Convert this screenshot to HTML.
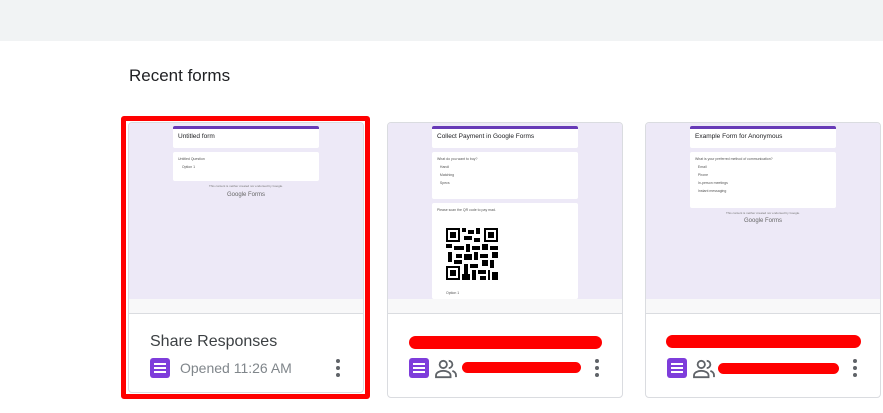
<!DOCTYPE html>
<html><head><style>
*{margin:0;padding:0;box-sizing:border-box}
body{width:883px;height:413px;background:#fff;font-family:"Liberation Sans",sans-serif;position:relative;overflow:hidden}
.hdr{position:absolute;left:0;top:0;width:883px;height:41px;background:#f1f3f4}
.h{position:absolute;left:129px;top:66px;font-size:17px;color:#202124}
.card{position:absolute;top:122px;width:236px;height:276px;border:1px solid #dadce0;border-radius:4px;overflow:hidden;background:#fff}
.pv{position:absolute;left:0;top:0;width:100%;height:176px;background:#ede9f7}
.strip{position:absolute;left:0;top:176px;width:100%;height:15px;background:#f8f8f9;border-bottom:1px solid #dadce0}
.fc{position:absolute;left:44px;width:146px;background:#fff;border-radius:2px}
.top{top:3px;height:22px;border-top:3px solid #673ab7;font-size:6.5px;color:#202124;padding:4px 5px}
.t{position:absolute;left:21px;top:210px;font-size:16px;color:#3c4043}
.ic{position:absolute;left:21px;top:235px;width:20px;height:20px;background:#7e3ddb;border-radius:3px}
.ic i{position:absolute;left:4px;width:12px;height:2px;background:#fff}
.tm{position:absolute;left:51px;top:237px;font-size:14px;color:#80868b}
.dots{position:absolute;left:207px;top:236px;width:4px}
.dots b{display:block;width:4px;height:4px;border-radius:2px;background:#5f6368;margin-bottom:3px}
.red{position:absolute;background:#f00;border-radius:7px}
.sm{font-size:3.5px;color:#555;padding:5px}
</style></head><body>
<div class="hdr"></div>
<div class="h">Recent forms</div>

<div class="card" style="left:128px;width:236px;height:271px">
 <div class="pv">
  <div class="fc top">Untitled form</div>
  <div class="fc sm" style="top:29px;height:29px">Untitled Question<br><br>&nbsp;&nbsp;&nbsp;&nbsp;Option 1</div>
  <div style="position:absolute;left:0;width:100%;top:61px;text-align:center;font-size:3px;color:#777">This content is neither created nor endorsed by Google.</div>
  <div style="position:absolute;left:0;width:100%;top:69px;text-align:center;font-size:6px;color:#666">Google Forms</div>
 </div>
 <div class="strip"></div>
 <div class="t">Share Responses</div>
 <div class="ic"><i style="top:5px"></i><i style="top:9px"></i><i style="top:13px"></i></div>
 <div class="tm">Opened 11:26 AM</div>
 <div class="dots"><b></b><b></b><b></b></div>
</div>
<div style="position:absolute;left:121px;top:116px;width:249px;height:283px;border:5px solid #f00;border-radius:3px"></div>

<div class="card" style="left:387px">
 <div class="pv">
  <div class="fc top">Collect Payment in Google Forms</div>
  <div class="fc sm" style="top:29px;height:47px">What do you want to buy?<br><br>&nbsp;&nbsp;&nbsp;Handi<br><br>&nbsp;&nbsp;&nbsp;Matching<br><br>&nbsp;&nbsp;&nbsp;Specs</div>
  <div class="fc sm" style="top:80px;height:96px">Please scan the QR code to pay mad.
   <svg style="position:absolute;left:14px;top:25px" width="52" height="52" viewBox="0 0 26 26">
    <g fill="#000"><path d="M0 0h7v7H0zM1 1v5h5V1zM2 2h3v3H2z" fill-rule="evenodd"/><path d="M19 0h7v7h-7zM20 1v5h5V1zM21 2h3v3h-3z" fill-rule="evenodd"/><path d="M0 19h7v7H0zM1 20v5h5v-5zM2 21h3v3H2z" fill-rule="evenodd"/>
    <path d="M8 0h2v2H8zM11 1h3v2h-3zM15 0h2v3h-2zM9 4h4v2H9zM14 5h3v2h-3zM0 8h3v2H0zM4 9h5v2H4zM10 8h2v4h-2zM13 9h4v2h-4zM18 8h3v3h-3zM22 9h4v2h-4zM1 12h2v5H1zM5 13h3v2H5zM9 13h4v3H9zM14 12h2v4h-2zM17 13h4v2h-4zM23 12h3v3h-3zM4 16h4v2H4zM18 16h3v3h-3zM22 16h2v4h-2zM9 18h2v5H9zM12 18h4v2h-4zM8 23h4v3H8zM13 21h2v5h-2zM16 21h4v2h-4zM17 24h3v2h-3zM21 21h1v5h-1zM23 22h3v4h-3z"/></g>
   </svg>
   <div style="position:absolute;left:14px;top:88px">Option 1</div>
  </div>
 </div>
 <div class="strip"></div>
 <div class="ic"><i style="top:5px"></i><i style="top:9px"></i><i style="top:13px"></i></div>
 <svg style="position:absolute;left:47px;top:236px" width="22" height="20" viewBox="0 0 24 22"><g fill="none" stroke="#5f6368" stroke-width="2"><circle cx="9" cy="6" r="4"/><path d="M1 20v-2c0-3 4-5 8-5s8 2 8 5v2z"/><path d="M15 2a4 4 0 0 1 0 8M19 13c2 1 4 2 4 5v2"/></g></svg>
 <div class="dots"><b></b><b></b><b></b></div>
</div>
<div class="red" style="left:409px;top:336px;width:193px;height:13px"></div>
<div class="red" style="left:462px;top:362px;width:119px;height:11px"></div>

<div class="card" style="left:645px">
 <div class="pv">
  <div class="fc top">Example Form for Anonymous</div>
  <div class="fc sm" style="top:29px;height:56px">What is your preferred method of communication?<br><br>&nbsp;&nbsp;&nbsp;Email<br><br>&nbsp;&nbsp;&nbsp;Phone<br><br>&nbsp;&nbsp;&nbsp;In-person meetings<br><br>&nbsp;&nbsp;&nbsp;Instant messaging</div>
  <div style="position:absolute;left:0;width:100%;top:88px;text-align:center;font-size:3px;color:#777">This content is neither created nor endorsed by Google.</div>
  <div style="position:absolute;left:0;width:100%;top:95px;text-align:center;font-size:6px;color:#666">Google Forms</div>
 </div>
 <div class="strip"></div>
 <div class="ic"><i style="top:5px"></i><i style="top:9px"></i><i style="top:13px"></i></div>
 <svg style="position:absolute;left:47px;top:236px" width="22" height="20" viewBox="0 0 24 22"><g fill="none" stroke="#5f6368" stroke-width="2"><circle cx="9" cy="6" r="4"/><path d="M1 20v-2c0-3 4-5 8-5s8 2 8 5v2z"/><path d="M15 2a4 4 0 0 1 0 8M19 13c2 1 4 2 4 5v2"/></g></svg>
 <div class="dots"><b></b><b></b><b></b></div>
</div>
<div class="red" style="left:666px;top:335px;width:195px;height:13px"></div>
<div class="red" style="left:718px;top:363px;width:121px;height:11px"></div>
</body></html>
